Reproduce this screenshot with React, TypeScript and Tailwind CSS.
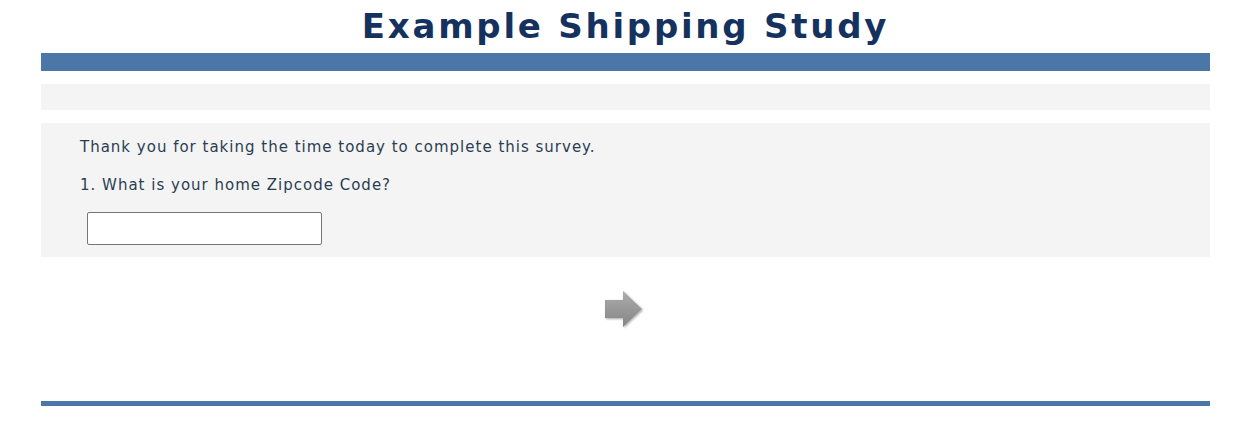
const App = () => {
  return (
    <div className="min-h-screen bg-white" style={{ fontFamily: '"DejaVu Sans", Verdana, sans-serif' }}>
      <div className="ml-[41px] w-[1169px]">
        {/* Header */}
        <h1 className="pt-[4px] h-[53px] text-center text-[34px] leading-[44px] font-bold tracking-[2.75px] text-[#15325f]">
          Example Shipping Study
        </h1>
        <div className="h-[18px] bg-[#4a76a8]" />
        <div className="mt-[13px] h-[26px] bg-[#f4f4f4]" />

        {/* Question panel */}
        <div className="mt-[13px] h-[134px] bg-[#f4f4f4] pl-[39px] pt-[14px]">
          <p className="text-[15px] leading-[21px] tracking-[1px] text-[#2b3d52]">
            Thank you for taking the time today to complete this survey.
          </p>
          <p className="mt-[17px] text-[15px] leading-[21px] tracking-[1px] text-[#2b3d52]">
            1. What is your home Zipcode Code?
          </p>
          <input
            type="text"
            className="mt-[16px] ml-[7px] block h-[33px] w-[235px] border border-[#767676] bg-white rounded-[2px]"
          />
        </div>

        {/* Next arrow */}
        <div className="flex justify-center pt-[32px] h-[144px]">
          <svg width="44" height="42" viewBox="0 0 44 42" className="mr-[4px]">
            <defs>
              <linearGradient id="ag" x1="0" y1="0" x2="0" y2="1">
                <stop offset="0" stopColor="#acacac" />
                <stop offset="1" stopColor="#858585" />
              </linearGradient>
              <filter id="sh" x="-20%" y="-20%" width="140%" height="140%">
                <feGaussianBlur in="SourceAlpha" stdDeviation="1" />
                <feOffset dx="1" dy="1" />
                <feComponentTransfer>
                  <feFuncA type="linear" slope="0.35" />
                </feComponentTransfer>
                <feMerge>
                  <feMergeNode />
                  <feMergeNode in="SourceGraphic" />
                </feMerge>
              </filter>
            </defs>
            <path d="M3 11 H21 V2 L40 20 L21 38 V29 H3 Z" fill="url(#ag)" filter="url(#sh)" />
          </svg>
        </div>

        <div className="h-[5px] bg-[#4a76a8]" />
      </div>
    </div>
  );
};

export default App;
